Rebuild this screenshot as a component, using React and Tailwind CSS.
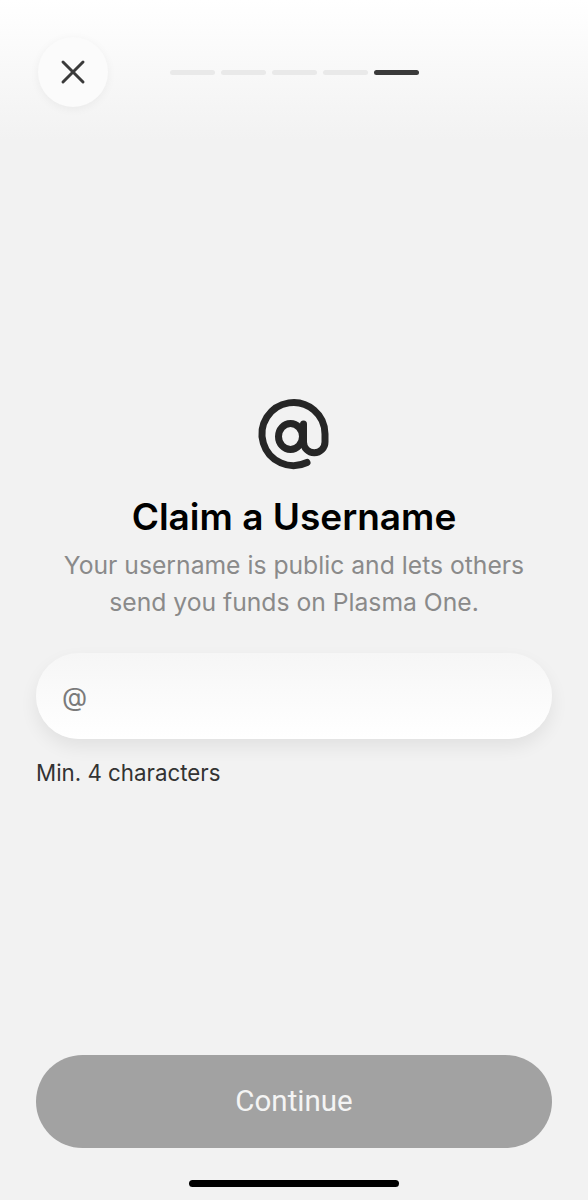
import { X } from 'lucide-react'

const steps = [false, false, false, false, true]

function AtIcon() {
  return (
    <svg width="80" height="80" viewBox="0 0 80 80" fill="none" stroke="#262626" strokeWidth="7" strokeLinecap="round" strokeLinejoin="round">
      <ellipse cx="36.5" cy="41.5" rx="12" ry="13" />
      <path d="M49.5 29V47A10.75 10.75 0 0 0 71 47V39A31.5 31.5 0 1 0 53 67.5" />
    </svg>
  )
}

export default function App() {
  return (
    <div
      className="flex h-[1200px] w-full flex-col bg-[#f2f2f2]"
      style={{ fontFamily: 'Inter, "Noto Sans", sans-serif' }}
    >
      {/* Header */}
      <div className="bg-gradient-to-b from-white to-[#f2f2f2] px-[38px] pt-[37px] pb-[33px]">
        <div className="flex items-center justify-between">
          <button className="flex h-[70px] w-[70px] items-center justify-center rounded-full bg-[#fbfbfb] shadow-[0_2px_10px_rgba(0,0,0,0.05)]">
            <X size={40} strokeWidth={1.8} className="text-[#3a3a3a]" />
          </button>
          <div className="flex gap-[6px]">
            {steps.map((active, i) => (
              <div
                key={i}
                className={`h-[5px] w-[45px] rounded-full ${active ? 'bg-[#3a3a3a]' : 'bg-[#e9e9e9]'}`}
              />
            ))}
          </div>
          <div className="w-[70px]" />
        </div>
      </div>

      {/* Body */}
      <div className="flex flex-col px-[36px]">
        <div className="mt-[255px] flex justify-center">
          <AtIcon />
        </div>
        <h1 className="mt-[20px] text-center text-[37px] leading-[44px] font-semibold text-black">
          Claim a Username
        </h1>
        <p className="mt-[8px] text-center text-[24.7px] leading-[37px] text-[#8a8a8a]">
          Your username is public and lets others
          <br />
          send you funds on Plasma One.
        </p>

        <div className="mt-[32px] flex h-[86px] items-center rounded-full bg-gradient-to-b from-[#f6f6f6] to-white px-[26px] shadow-[0_8px_18px_rgba(0,0,0,0.07)]">
          <span className="text-[26px] text-[#7a7a7a]">@</span>
        </div>
        <p className="mt-[20px] text-[22.3px] leading-[28px] text-[#333333]">Min. 4 characters</p>
      </div>

      <div className="flex-1" />

      {/* Footer */}
      <div className="flex flex-col items-center px-[36px]">
        <button
          className="flex h-[93px] w-full items-center justify-center rounded-full bg-[#a2a2a2] text-[29.5px] text-[#f4f4f4]"
          style={{ fontFamily: 'Roboto, "Noto Sans", sans-serif' }}
        >
          Continue
        </button>
        <div className="mt-[32px] mb-[13px] h-[7px] w-[210px] rounded-full bg-black" />
      </div>
    </div>
  )
}
